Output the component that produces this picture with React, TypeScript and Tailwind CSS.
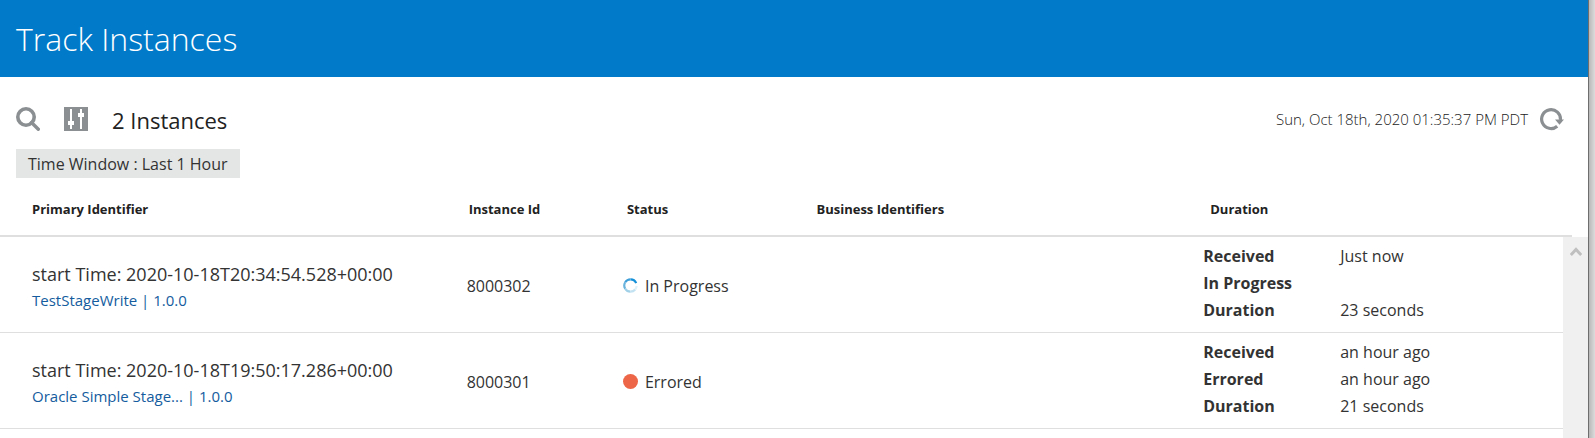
import * as React from 'react';

interface TimelineEntry {
  label: string;
  value: string;
}

interface Instance {
  id: string;
  startTime: string;
  integration: string;
  version: string;
  status: 'In Progress' | 'Errored';
  timeline: TimelineEntry[];
}

const instances: Instance[] = [
  {
    id: '8000302',
    startTime: '2020-10-18T20:34:54.528+00:00',
    integration: 'TestStageWrite',
    version: '1.0.0',
    status: 'In Progress',
    timeline: [
      { label: 'Received', value: 'Just now' },
      { label: 'In Progress', value: '' },
      { label: 'Duration', value: '23 seconds' },
    ],
  },
  {
    id: '8000301',
    startTime: '2020-10-18T19:50:17.286+00:00',
    integration: 'Oracle Simple Stage...',
    version: '1.0.0',
    status: 'Errored',
    timeline: [
      { label: 'Received', value: 'an hour ago' },
      { label: 'Errored', value: 'an hour ago' },
      { label: 'Duration', value: '21 seconds' },
    ],
  },
];

function SearchIcon() {
  return (
    <svg width="24" height="24" viewBox="0 0 24 24" fill="none" stroke="#8b8f92">
      <circle cx="10" cy="10" r="8.2" strokeWidth="3.6" />
      <path d="M15.5 15.5 L22.3 22.3" strokeWidth="3.4" strokeLinecap="round" />
    </svg>
  );
}

function FilterIcon() {
  return (
    <svg width="24" height="24" viewBox="0 0 24 24" shapeRendering="crispEdges">
      <rect width="24" height="24" fill="#8b8f92" />
      <g fill="#fff">
        <rect x="6" y="2" width="2" height="20" />
        <rect x="4" y="14" width="6" height="4" />
        <rect x="16" y="2" width="2" height="20" />
        <rect x="14" y="6" width="6" height="4" />
      </g>
    </svg>
  );
}

function RefreshIcon() {
  return (
    <svg width="24" height="24" viewBox="0 0 24 24" fill="none">
      <path d="M17.2 19.2 A9.4 9.4 0 1 1 20.4 13" stroke="#8b8f92" strokeWidth="3.2" />
      <path d="M15 12.6 H24 L19.5 17.8 Z" fill="#8b8f92" />
    </svg>
  );
}

function StatusIcon({ status }: { status: Instance['status'] }) {
  if (status === 'Errored') {
    return <span className="size-[15px] rounded-full bg-[#ed6647]" />;
  }

  return (
    <svg width="15" height="15" viewBox="0 0 15 15" fill="none" strokeWidth="2.2">
      <path d="M7.5 1.3 A6.2 6.2 0 0 1 13.2 5.1" stroke="#1490d8" />
      <path d="M2.2 4.3 A6.2 6.2 0 0 1 7.5 1.3" stroke="#3f9fd8" />
      <path d="M2.2 10.7 A6.2 6.2 0 0 1 2.2 4.3" stroke="#6ab3dc" />
      <path d="M7.5 13.7 A6.2 6.2 0 0 1 2.2 10.7" stroke="#9fd0e8" />
      <path d="M12.2 11.5 A6.2 6.2 0 0 1 7.5 13.7" stroke="#c3e2f1" />
      <path d="M13.6 8 A6.2 6.2 0 0 1 12.2 11.5" stroke="#e0f1f9" />
    </svg>
  );
}

function InstanceRow({ instance }: { instance: Instance }) {
  return (
    <tr className="h-24 *:border-b *:border-[#dfdfdf]">
      <td className="pt-1 pl-8">
        <div className="text-lg leading-[26px]">start Time: {instance.startTime}</div>
        <a href="#" className="block text-[15px] leading-[26px] text-[#145c9e]">
          {instance.integration} | {instance.version}
        </a>
      </td>
      <td className="pt-[2px] pl-[29px]">{instance.id}</td>
      <td className="pt-[2px] pl-[29px]">
        <div className="flex items-center gap-[7px]">
          <StatusIcon status={instance.status} />
          {instance.status}
        </div>
      </td>
      <td />
      <td className="pb-[2px] pl-[31px]">
        <dl className="leading-[27px]">
          {instance.timeline.map((entry) => (
            <div key={entry.label} className="flex">
              <dt className="w-[137px] font-bold">{entry.label}</dt>
              <dd>{entry.value}</dd>
            </div>
          ))}
        </dl>
      </td>
    </tr>
  );
}

export default function App() {
  return (
    <div className="flex min-h-screen bg-white font-['Open_Sans','Noto_Sans',sans-serif] text-[#333] whitespace-nowrap">
      <main className="flex flex-1 flex-col">
        <header className="flex h-[77px] items-center bg-[#007ac9] px-4">
          <h1 className="text-[32px] font-light text-white">Track Instances</h1>
        </header>

        <div className="flex items-center justify-between px-4 pt-[26px] pr-6">
          <div className="flex items-center gap-6">
            <button type="button" aria-label="Search">
              <SearchIcon />
            </button>
            <button type="button" aria-label="Filter">
              <FilterIcon />
            </button>
            <h2 className="pt-[2px] text-[22px] leading-[30px] text-[#222]">2 Instances</h2>
          </div>
          <div className="flex items-center gap-3">
            <time className="text-[15px] font-light text-[#222]">Sun, Oct 18th, 2020 01:35:37 PM PDT</time>
            <button type="button" aria-label="Refresh">
              <RefreshIcon />
            </button>
          </div>
        </div>

        <div className="flex px-4 pt-[14px]">
          <span className="bg-[#e4e6e6] px-3 pt-[2px] leading-[27px]">Time Window : Last 1 Hour</span>
        </div>

        <div className="flex flex-1 items-stretch">
          <div className="flex-1">
            <table className="w-full table-fixed border-separate border-spacing-0">
              <thead>
                <tr className="h-[59px] text-left text-[13px] text-[#222] *:border-b-2 *:border-[#dfdfdf] *:pt-[6px]">
                  <th className="w-[28%] pl-8">Primary Identifier</th>
                  <th className="w-[10%] pl-[31px]">Instance Id</th>
                  <th className="w-[12%] pl-[33px]">Status</th>
                  <th className="w-[25%] pl-[35px]">Business Identifiers</th>
                  <th className="w-[25%] pl-[38px]">Duration</th>
                </tr>
              </thead>
              <tbody>
                {instances.map((instance) => (
                  <InstanceRow key={instance.id} instance={instance} />
                ))}
              </tbody>
            </table>
          </div>

          {/* scroll track sits below the header row */}
          <div className="flex w-[25px] flex-col">
            <div className="h-[59px] w-[9px] border-b-2 border-[#dfdfdf]" />
            <div className="flex flex-1 justify-center bg-[#f0f0f0] pt-[10px]">
              <svg width="12" height="10" viewBox="0 0 12 10" fill="none">
                <path d="M0.8 8 L6 2.4 L11.2 8" stroke="#bfbfbf" strokeWidth="3" />
              </svg>
            </div>
          </div>
        </div>
      </main>

      <div className="w-[7px] border-l border-[#6e6e6e] bg-linear-to-r from-[#b8b8b8] to-[#dcdcdc]" />
    </div>
  );
}
